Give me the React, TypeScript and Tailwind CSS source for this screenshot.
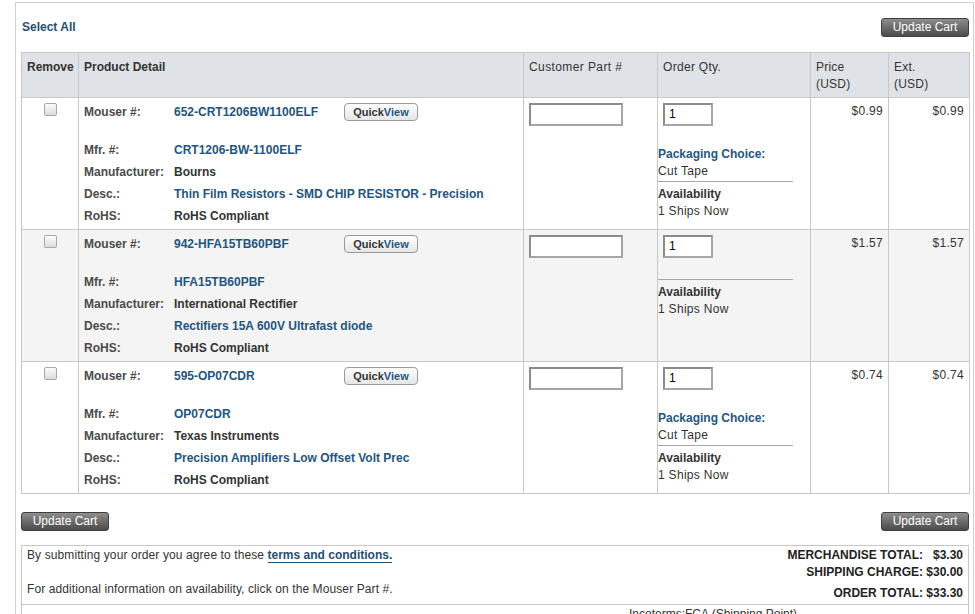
import React from "react";

interface CartItem {
    mouser: string;
    mfr: string;
    manufacturer: string;
    desc: string;
    rohs: string;
    qty: string;
    packaging?: string;
    availability: string;
    price: string;
    ext: string;
}

const ITEMS: CartItem[] = [
    {
        mouser: "652-CRT1206BW1100ELF",
        mfr: "CRT1206-BW-1100ELF",
        manufacturer: "Bourns",
        desc: "Thin Film Resistors - SMD CHIP RESISTOR - Precision",
        rohs: "RoHS Compliant",
        qty: "1",
        packaging: "Cut Tape",
        availability: "1 Ships Now",
        price: "$0.99",
        ext: "$0.99",
    },
    {
        mouser: "942-HFA15TB60PBF",
        mfr: "HFA15TB60PBF",
        manufacturer: "International Rectifier",
        desc: "Rectifiers 15A 600V Ultrafast diode",
        rohs: "RoHS Compliant",
        qty: "1",
        availability: "1 Ships Now",
        price: "$1.57",
        ext: "$1.57",
    },
    {
        mouser: "595-OP07CDR",
        mfr: "OP07CDR",
        manufacturer: "Texas Instruments",
        desc: "Precision Amplifiers Low Offset Volt Prec",
        rohs: "RoHS Compliant",
        qty: "1",
        packaging: "Cut Tape",
        availability: "1 Ships Now",
        price: "$0.74",
        ext: "$0.74",
    },
];

const UpdateCartButton = () => (
    <button className="h-[19px] w-[88px] rounded-[3px] border border-[#3f3f3f] bg-gradient-to-b from-[#8e8e8e] to-[#4b4b4b] text-[12px] leading-[17px] text-white">
        Update Cart
    </button>
);

const Checkbox = () => (
    <div className="mx-auto h-[13px] w-[13px] rounded-[2px] border border-[#a8a8a8] bg-gradient-to-b from-[#fdfdfd] to-[#dcdcdc]" />
);

const TextBox = ({ value, width }: { value?: string; width: string }) => (
    <div
        className={`${width} h-[23px] border-2 border-[#a6a6a6] border-t-[#8c8c8c] border-l-[#8c8c8c] bg-white pl-[4px] text-[12px] leading-[19px] text-black`}
    >
        {value}
    </div>
);

const DetailRow = ({ label, value, blue }: { label: string; value: string; blue?: boolean }) => (
    <div className="flex h-[22px] items-center">
        <span className="w-[90px] text-[#4a4a4a]">{label}</span>
        <span className={blue ? "text-[#1f5580]" : "text-[#333]"}>{value}</span>
    </div>
);

const ItemRow = ({ item, shaded }: { item: CartItem; shaded: boolean }) => (
    <tr className={shaded ? "bg-[#f4f4f4]" : "bg-white"}>
        <td className="border border-[#c8c8c8] pt-[5px] align-top">
            <Checkbox />
        </td>
        <td className="border border-[#c8c8c8] pl-[5px] pt-[4px] pb-[2px] align-top font-bold">
            <div className="flex h-[20px] items-center">
                <span className="w-[90px] text-[#4a4a4a]">Mouser #:</span>
                <span className="w-[170px] text-[#1f5580]">{item.mouser}</span>
                <span className="flex h-[18px] w-[74px] items-center justify-center rounded-[4px] border border-[#9a9a9a] bg-gradient-to-b from-white to-[#e6e6e6] text-[11px] font-bold">
                    <span className="text-[#333]">Quick</span>
                    <span className="text-[#1f5580]">View</span>
                </span>
            </div>
            <div className="mt-[17px]">
                <DetailRow label="Mfr. #:" value={item.mfr} blue />
                <DetailRow label="Manufacturer:" value={item.manufacturer} />
                <DetailRow label="Desc.:" value={item.desc} blue />
                <DetailRow label="RoHS:" value={item.rohs} />
            </div>
        </td>
        <td className="border border-[#c8c8c8] pl-[5px] pt-[5px] align-top">
            <TextBox width="w-[94px]" />
        </td>
        <td className="border border-[#c8c8c8] pt-[5px] align-top tracking-[0.3px]">
            <div className="ml-[5px]">
                <TextBox width="w-[50px]" value={item.qty} />
            </div>
            <div className={item.packaging ? "mt-[20px]" : "mt-[21px]"}>
                {item.packaging && (
                    <div className="leading-[17px]">
                        <div className="font-bold tracking-normal text-[#1f5580]">Packaging Choice:</div>
                        <div className="text-[#333]">{item.packaging}</div>
                    </div>
                )}
                <div className="mt-[1px] w-[135px] border-t border-[#a8a8a8] pt-[4px] leading-[17px]">
                    <div className="font-bold tracking-normal text-[#333]">Availability</div>
                    <div className="text-[#333]">{item.availability}</div>
                </div>
            </div>
        </td>
        <td className="border border-[#c8c8c8] pr-[5px] pt-[5px] text-right align-top leading-[17px] tracking-[0.3px] text-[#333]">
            {item.price}
        </td>
        <td className="border border-[#c8c8c8] pr-[5px] pt-[5px] text-right align-top leading-[17px] tracking-[0.3px] text-[#333]">
            {item.ext}
        </td>
    </tr>
);

export default function App() {
    return (
        <div
            className="h-[614px] w-[975px] overflow-hidden bg-white text-[12px] text-[#333]"
            style={{ fontFamily: '"Liberation Sans", Arial, sans-serif' }}
        >
            <div className="ml-[15px] mt-[2px] w-[959px] border-l border-r border-t border-[#cfcfcf] pl-[5px] pr-[4px]">
                <div className="flex items-start justify-between pt-[15px] mb-[15px]">
                    <a className="ml-[1px] font-bold text-[#1f4f73]">Select All</a>
                    <UpdateCartButton />
                </div>

                <table className="w-[948px] table-fixed border-collapse text-[12px] leading-[17px]">
                    <colgroup>
                        <col className="w-[57px]" />
                        <col className="w-[445px]" />
                        <col className="w-[134px]" />
                        <col className="w-[153px]" />
                        <col className="w-[78px]" />
                        <col className="w-[81px]" />
                    </colgroup>
                    <thead>
                        <tr className="h-[45px] bg-[#dfe3e8] text-left align-top text-[#333]">
                            <th className="border border-[#c8c8c8] pl-[5px] pt-[6px] font-bold">Remove</th>
                            <th className="border border-[#c8c8c8] pl-[5px] pt-[6px] font-bold">Product Detail</th>
                            <th className="border border-[#c8c8c8] pl-[5px] pt-[6px] font-normal tracking-[0.4px]">Customer Part #</th>
                            <th className="border border-[#c8c8c8] pl-[5px] pt-[6px] font-normal tracking-[0.3px]">Order Qty.</th>
                            <th className="border border-[#c8c8c8] pl-[5px] pt-[6px] font-normal tracking-[0.2px]">
                                Price
                                <br />
                                (USD)
                            </th>
                            <th className="border border-[#c8c8c8] pl-[5px] pt-[6px] font-normal tracking-[0.2px]">
                                Ext.
                                <br />
                                (USD)
                            </th>
                        </tr>
                    </thead>
                    <tbody>
                        {ITEMS.map((item, index) => (
                            <ItemRow key={item.mouser} item={item} shaded={index % 2 === 1} />
                        ))}
                    </tbody>
                </table>

                <div className="mt-[18px] flex justify-between">
                    <UpdateCartButton />
                    <UpdateCartButton />
                </div>

                <div className="mt-[14px] w-[948px] border-l border-r border-t border-[#c8c8c8]">
                    <div className="flex justify-between border-b border-[#c8c8c8] pb-[2px] pt-[1px] leading-[17px]">
                        <div className="pl-[5px] tracking-[0.1px]">
                            <div>
                                By submitting your order you agree to these{" "}
                                <a className="border-b border-[#1f4f73] font-bold tracking-normal text-[#1f4f73]">terms and conditions.</a>
                            </div>
                            <div className="mt-[17px]">For additional information on availability, click on the Mouser Part #.</div>
                        </div>
                        <div className="pr-[5px] text-right font-bold text-[#222]">
                            <div>
                                MERCHANDISE TOTAL:<span className="ml-[10px]">$3.30</span>
                            </div>
                            <div>SHIPPING CHARGE: $30.00</div>
                            <div className="mt-[4px]">ORDER TOTAL: $33.30</div>
                        </div>
                    </div>
                    <div className="pl-[607px] pt-[1px] leading-[17px]">Incoterms:FCA (Shipping Point)</div>
                </div>
            </div>
        </div>
    );
}
